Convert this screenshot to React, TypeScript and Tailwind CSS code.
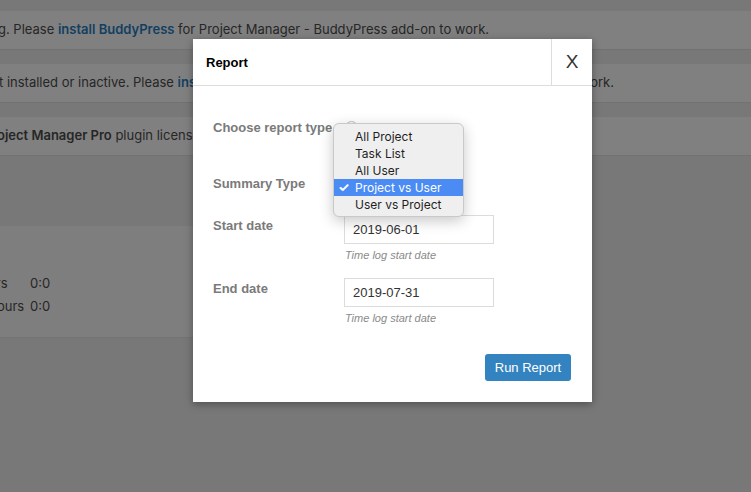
import React from 'react';

const menuItems = ['All Project', 'Task List', 'All User', 'Project vs User', 'User vs Project'];

const DateRow: React.FC<{ label: string; value: string; className?: string }> = ({ label, value, className }) => (
  <div className={`flex ${className || ''}`}>
    <div className="w-[131px] pt-[3px] text-[13px] leading-4 font-bold text-[#7a7a7a]">{label}</div>
    <div className="flex flex-col">
      <div className="w-[150px] h-[29px] border border-[#dcdcdc] pl-[8px] flex items-center text-[13px] text-[#333]">{value}</div>
      <div className="mt-[4px] text-[11px] leading-[14px] italic text-[#8a8a8a] pl-[1px]">Time log start date</div>
    </div>
  </div>
);

const App: React.FC = () => {
  return (
    <div className="relative w-[751px] h-[492px] overflow-hidden bg-[#787878] font-['Inter',sans-serif] text-[13px] text-[#262626]">
      {/* page behind the overlay */}
      <div className="pt-[11px]">
        <div className="h-[39px] bg-[#808080] border-b border-[#727272] flex items-center -ml-[2px] whitespace-nowrap">
          <span>g. Please <a className="font-semibold text-[#123f61]">install BuddyPress</a> for Project Manager - BuddyPress add-on to work.</span>
        </div>
        <div className="mt-[14px] h-[39px] bg-[#808080] border-b border-[#727272] flex items-center whitespace-nowrap">
          <div className="w-[615px] flex justify-between -ml-[1px]">
            <span>t installed or inactive. Please <a className="font-semibold text-[#123f61]">install Project Manager</a></span>
            <span>to work.</span>
          </div>
        </div>
        <div className="mt-[14px] h-[39px] bg-[#808080] border-b border-[#727272] flex items-center whitespace-nowrap -ml-[3px]">
          <span><b className="font-semibold">oject Manager Pro</b> plugin license is not active.</span>
        </div>
        <div className="mt-[70px] w-[420px] h-[112px] bg-[#7e7e7e] border-b border-[#747474] pt-[49px]">
          <div className="-ml-[61px] grid grid-cols-[91px_auto] gap-y-[7px] leading-4 whitespace-nowrap">
            <span>Total hours</span><span>0:0</span>
            <span>Logged hours</span><span>0:0</span>
          </div>
        </div>
      </div>

      {/* modal */}
      <div className="absolute left-[193px] top-[39px] w-[399px] h-[363px] bg-white shadow-[0_2px_8px_rgba(0,0,0,0.35)] font-['Liberation_Sans',Arial,sans-serif]">
        <div className="h-[47px] border-b border-[#dddddd] flex">
          <div className="flex-1 pl-[13px] pt-[1px] flex items-center text-[13px] font-bold text-black">Report</div>
          <div className="w-[41px] border-l border-[#dddddd] flex items-center justify-center text-[19px] text-[#333] pt-[1px]">X</div>
        </div>

        <div className="pl-[20px] pr-[21px] pt-[34px] pb-[21px] flex flex-col">
          <div className="flex h-4 items-center">
            <div className="w-[132px] whitespace-nowrap text-[13px] font-bold text-[#7a7a7a]">Choose report type</div>
            <div className="-mt-[2px] w-[13px] h-[13px] rounded-full border border-[#bdbdbd]" />
          </div>
          <div className="mt-[40px] flex h-4 items-center">
            <div className="w-[131px] text-[13px] font-bold text-[#7a7a7a]">Summary Type</div>
          </div>
          <DateRow className="mt-[23px]" label="Start date" value="2019-06-01" />
          <DateRow className="mt-[16px]" label="End date" value="2019-07-31" />
          <div className="mt-[29px] flex justify-end">
            <button className="h-[27px] w-[86px] rounded-[3px] bg-[#3383c0] text-white text-[13px]">Run Report</button>
          </div>
        </div>

        {/* open select menu */}
        <div className="absolute left-[140px] top-[84px] w-[131px] rounded-[6px] border border-[#c9c9c9] bg-[#efefef] shadow-[0_4px_14px_rgba(0,0,0,0.22)] pt-[4px] pb-[3px] font-['Inter',sans-serif] text-[12px] text-[#1f1f1f]">
          {menuItems.map(item => {
            const active = item === 'Project vs User';
            return (
              <div key={item} className={`relative h-[17px] leading-[17px] pl-[21px] ${active ? 'bg-[#4a8cf4] text-white' : ''}`}>
                {active && <span className="absolute left-[4px] top-0 text-[13px] font-bold">✓</span>}
                {item}
              </div>
            );
          })}
        </div>
      </div>
    </div>
  );
};

export default App;
